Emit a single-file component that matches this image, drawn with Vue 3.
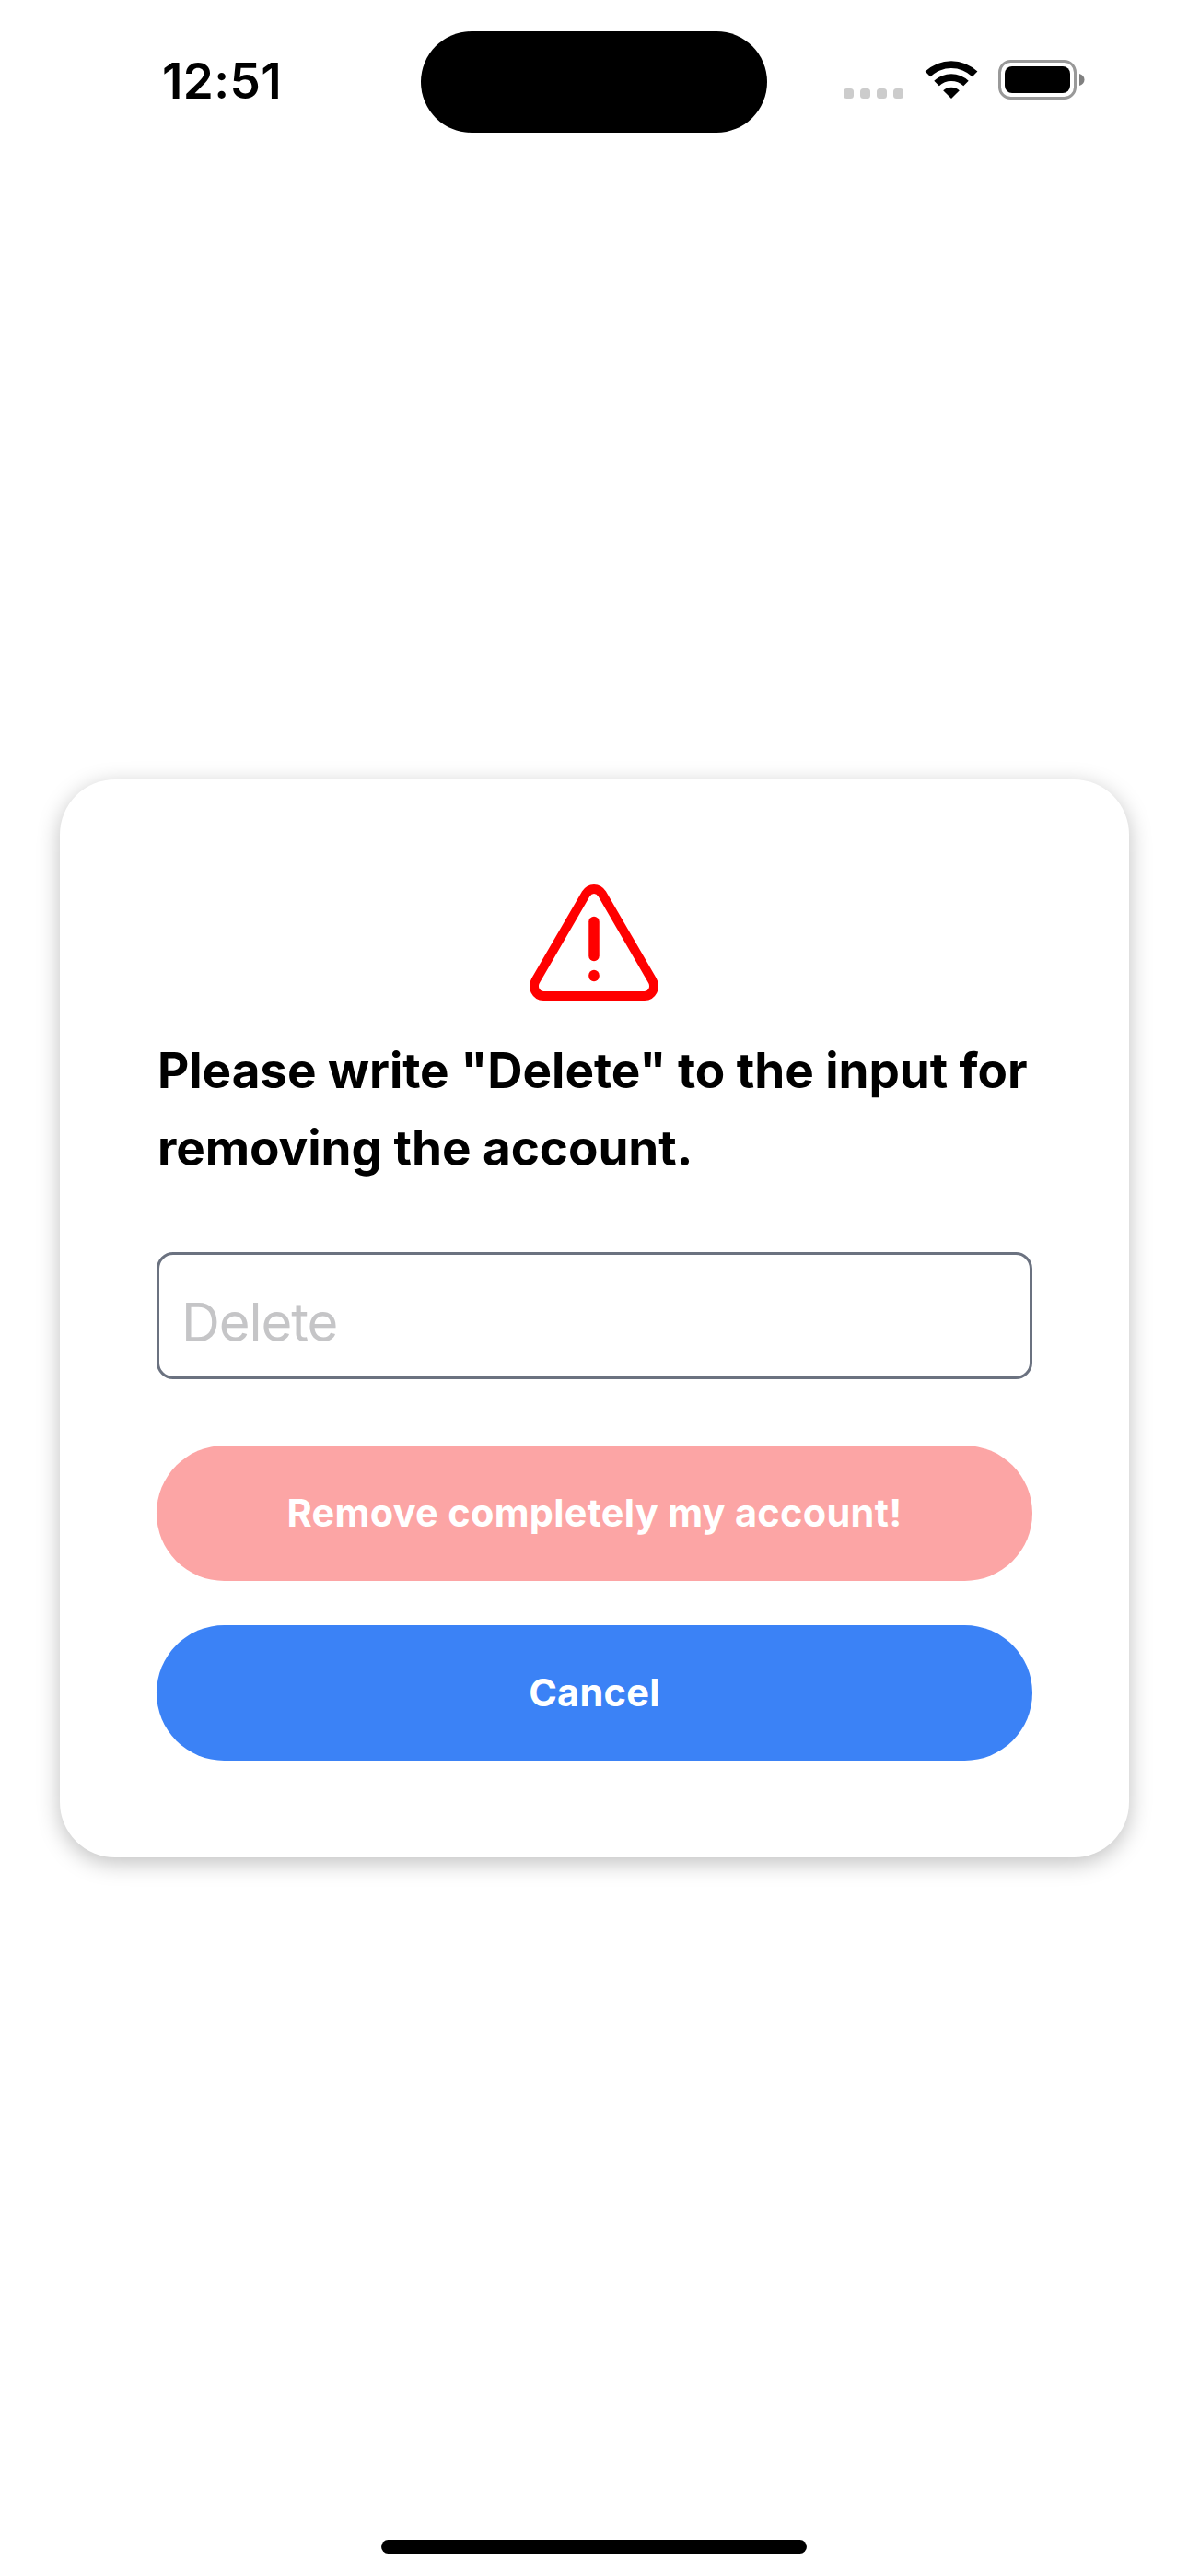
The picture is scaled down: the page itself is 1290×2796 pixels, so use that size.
<script setup>
import { ref } from 'vue'

const confirmation = ref('')
</script>

<template>
  <div class="screen">
    <header class="status">
      <div class="side left"><span class="time">12:51</span></div>
      <div class="island"></div>
      <div class="side right">
        <div class="dots"><i></i><i></i><i></i><i></i></div>
        <svg class="wifi" width="58" height="42" viewBox="0 0 58 42">
          <path d="M.6 12.6A41 41 0 0 1 57.4 12.6L51.8 18.2A33 33 0 0 0 6.2 18.2Z" />
          <path d="M10.3 22.7A27 27 0 0 1 47.7 22.7L42.2 28.3A19 19 0 0 0 15.8 28.3Z" />
          <path d="M20.2 33.2A13 13 0 0 1 37.8 33.2L29 42Z" />
        </svg>
        <svg class="battery" width="94" height="43" viewBox="0 0 94 43">
          <rect x="1.5" y="1.5" width="82" height="40" rx="12" fill="none" stroke="#999" stroke-width="3" />
          <rect x="7" y="7" width="71" height="29" rx="8" />
          <path d="M88 15C91.500 16 93.500 18.500 93.500 21.500S91.500 27 88 28Z" fill="#808080" />
        </svg>
      </div>
    </header>

    <main class="card">
      <svg class="warning" width="140" height="126" viewBox="0 0 140 126" fill="none" stroke="#f00" stroke-linecap="round">
        <path d="M61 10.500Q64.500 5 70 5T79 10.500L133.500 104.500C137.500 112 133 121 125 121H15C7 121 2.500 112 6.500 104.500Z" stroke-width="10" />
        <path d="M70 40.500V77.500" stroke-width="11.500" />
        <path d="M70 98.500V99.500" stroke-width="11.500" />
      </svg>
      <p class="message">Please write "Delete" to the input for<br />removing the account.</p>
      <input v-model="confirmation" class="field" type="text" placeholder="Delete" />
      <button class="btn danger" type="button"><span>Remove completely my account!</span></button>
      <button class="btn cancel" type="button"><span>Cancel</span></button>
    </main>

    <div class="home"></div>
  </div>
</template>

<style>
body {
  margin: 0;
  background: #fff;
}
</style>

<style scoped>
.screen {
  box-sizing: border-box;
  width: 1290px;
  height: 2796px;
  display: flex;
  flex-direction: column;
  align-items: center;
  padding-bottom: 24px;
  overflow: hidden;
  background: #fff;
  color: #000;
  font-family: Inter, "Liberation Sans", sans-serif;
}
.status {
  width: 100%;
  height: 177px;
  display: flex;
  align-items: flex-start;
  flex: none;
}
.side {
  height: 177px;
  display: flex;
  align-items: flex-start;
}
.left {
  box-sizing: border-box;
  width: 457px;
  padding: 56px 0 0 176px;
}
.time {
  font-size: 53px;
  line-height: 64px;
  font-weight: 600;
  letter-spacing: 0.4px;
}
.island {
  width: 376px;
  height: 110px;
  margin-top: 34px;
  border-radius: 55px;
  background: #000;
}
.right {
  padding: 65px 0 0 83px;
}
.dots {
  display: flex;
  gap: 7px;
  margin-top: 31px;
}
.dots i {
  width: 11px;
  height: 11px;
  border-radius: 3.5px;
  background: #ccc;
}
.wifi {
  margin-left: 23px;
}
.battery {
  margin-left: 22px;
}
.card {
  box-sizing: border-box;
  width: 1161px;
  height: 1170px;
  margin: 669px 0 0 1px;
  padding: 114px 105px 105px;
  display: flex;
  flex-direction: column;
  align-items: center;
  flex: none;
  border-radius: 60px;
  background: #fff;
  box-shadow: 0 6px 24px rgba(0, 0, 0, 0.25);
}
.warning {
  flex: none;
  margin-right: 1px;
}
.message {
  box-sizing: border-box;
  width: 100%;
  margin: 34px 0 0;
  padding-left: 1px;
  font-size: 53px;
  line-height: 84px;
  font-weight: 700;
  letter-spacing: -0.05px;
  white-space: nowrap;
}
.field {
  box-sizing: border-box;
  width: 951px;
  height: 138px;
  margin: 71px 0 0;
  padding: 13px 24px 0;
  border: 3px solid #6b7280;
  border-radius: 18px;
  outline: none;
  background: #fff;
  font-family: inherit;
  font-size: 58px;
  letter-spacing: -1.1px;
}
.field::placeholder {
  color: #c5c5c7;
  opacity: 1;
}
.btn {
  width: 951px;
  height: 147px;
  padding: 0 0 2px;
  border: 0;
  border-radius: 73.5px;
  color: #fff;
  font-family: inherit;
  font-size: 41.5px;
  font-weight: 700;
  letter-spacing: 0.28px;
}
.danger {
  margin-top: 72px;
  background: #fca5a5;
}
.cancel {
  margin-top: 48px;
  background: #3b82f6;
}
.home {
  width: 462px;
  height: 15px;
  margin-top: auto;
  border-radius: 8px;
  background: #000;
}
</style>
